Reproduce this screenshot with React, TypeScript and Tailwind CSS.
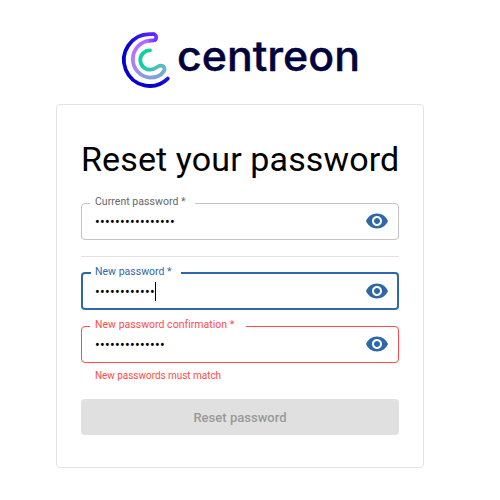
import React from 'react';

function Eye({ className }: { className: string }) {
  return (
    <svg viewBox="0 0 24 24" className={`h-6 w-6 shrink-0 fill-[#2e68aa] ${className}`}>
      <path d="M12 4.5C7 4.5 2.73 7.61 1 12c1.73 4.39 6 7.5 11 7.5s9.27-3.11 11-7.5c-1.73-4.39-6-7.5-11-7.5M12 17c-2.76 0-5-2.24-5-5s2.24-5 5-5 5 2.24 5 5-2.24 5-5 5m0-8c-1.66 0-3 1.34-3 3s1.34 3 3 3 3-1.34 3-3-1.34-3-3-3" />
    </svg>
  );
}

function Logo() {
  return (
    <svg viewBox="115 25 250 68" className="ml-[115px] h-[68px] w-[250px]">
      <defs>
        <linearGradient id="outer" gradientUnits="userSpaceOnUse" x1="132" y1="52" x2="154" y2="34">
          <stop offset="0" stopColor="#0500d0" />
          <stop offset="1" stopColor="#5a2bff" />
        </linearGradient>
        <linearGradient id="middle" gradientUnits="userSpaceOnUse" x1="142" y1="38" x2="160" y2="78">
          <stop offset="0" stopColor="#b366ff" />
          <stop offset="0.4" stopColor="#b47bff" />
          <stop offset="1" stopColor="#78a8d0" />
        </linearGradient>
        <linearGradient id="inner" gradientUnits="userSpaceOnUse" x1="148" y1="58" x2="165" y2="74">
          <stop offset="0" stopColor="#10cfa0" />
          <stop offset="1" stopColor="#78b2cc" />
        </linearGradient>
        <linearGradient id="turn" gradientUnits="userSpaceOnUse" x1="148" y1="0" x2="157" y2="0">
          <stop offset="0" stopColor="#a850ff" />
          <stop offset="1" stopColor="#6a30ff" />
        </linearGradient>
      </defs>
      <g fill="none" strokeWidth="3.8" strokeLinecap="round">
        <path stroke="url(#middle)" d="M150 40.7 A18.5 18.5 0 0 0 150 77.6 C157 77.6 161 75.3 163.6 71.6" />
        <path stroke="url(#turn)" d="M153.5 34.1 C157 34.1 157 40.1 153.5 40.3 L150 40.7" />
        <path stroke="url(#inner)" d="M150 50.3 A9.7 9.7 0 0 0 150 69.7 C156 69.7 157.2 65.6 160.6 65.6 C164.4 65.6 165.6 69 163.6 71.6" />
        <path stroke="url(#outer)" d="M167.8 78.6 A25.9 25.9 0 1 1 150 34.1 L153.5 34.1" />
      </g>
      <text x="177" y="70.9" textLength="183" lengthAdjust="spacingAndGlyphs" className="fill-[#02023d] font-['Inter',sans-serif] text-[41px] font-medium" stroke="#02023d" strokeWidth="0.4">
        centreon
      </text>
    </svg>
  );
}

type FieldProps = {
  label: string;
  dots: number;
  border: string;
  labelStyle: string;
  notch: string;
  focused?: boolean;
};

function Field({ label, dots, border, labelStyle, notch, focused }: FieldProps) {
  return (
    <div className="relative flex h-full items-center pl-3.5 pr-2.5">
      <fieldset className={`absolute inset-x-0 bottom-0 -top-[5px] rounded px-2 ${border}`}>
        <legend className={`h-[11px] ${notch}`} />
      </fieldset>
      <label className={`absolute left-3.5 whitespace-nowrap text-[10.5px] leading-3 ${labelStyle}`}>
        {label}
      </label>
      <span className={`flex flex-1 items-center text-sm leading-5 tracking-[0.28px] text-black ${focused ? 'pt-0.5' : ''}`}>
        {'•'.repeat(dots)}
        {focused && <span className="mb-0.5 h-[19px] w-px bg-black" />}
      </span>
      <Eye className={focused ? '' : 'mb-px'} />
    </div>
  );
}

export default function App() {
  return (
    <main className="h-[500px] w-[500px] bg-white pt-[25px] font-['Roboto',sans-serif]">
      <Logo />
      <form className="ml-14 mt-[11px] flex h-[364px] w-[368px] flex-col rounded border border-[#e3e3e3] px-6">
        <h1 className="mt-[33px] h-[42px] whitespace-nowrap text-[34px] leading-[42px] tracking-[0.12px] text-black">
          Reset your password
        </h1>
        <div className="mt-[23px] h-[37px]">
          <Field label="Current password *" dots={16} border="border border-[#c4c4c4]" labelStyle="-top-[7px] text-[#666666] tracking-[0.04px]" notch="w-[105px]" />
        </div>
        <hr className="mt-4 border-[#e3e3e3]" />
        <div className="mt-[15px] h-[38px]">
          <Field label="New password *" dots={12} border="border-2 border-[#2e68aa]" labelStyle="-top-[6px] text-[#2e68aa] tracking-[0.02px]" notch="w-[90px]" focused />
        </div>
        <div className="mt-4 h-[37px]">
          <Field label="New password confirmation *" dots={14} border="border border-[#ff4a4a]" labelStyle="-top-[7px] text-[#ff4a4a] tracking-[0.02px]" notch="w-[156px]" />
        </div>
        <p className="ml-3.5 mt-[7px] h-3 text-[10px] leading-3 tracking-[-0.04px] text-[#ff4a4a]">New passwords must match</p>
        <button disabled className="mt-[17px] h-9 rounded bg-[#e0e0e0] pt-px text-[13px] font-medium tracking-[0.02px] text-[#999999]">
          Reset password
        </button>
      </form>
    </main>
  );
}
